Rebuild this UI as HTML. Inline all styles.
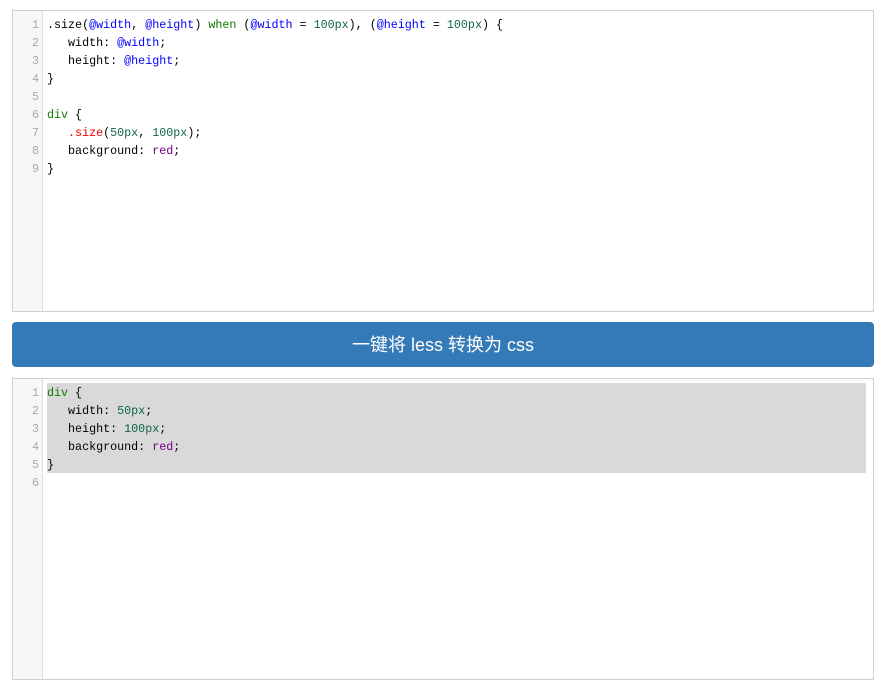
<!DOCTYPE html>
<html><head><meta charset="utf-8"><style>
body{margin:0;background:#fff;width:885px;height:689px;position:relative;overflow:hidden}
.ed{position:absolute;left:12px;width:860px;height:300px;border:1px solid #d0d0d0;background:#fff;overflow:hidden}
.gut{position:absolute;left:0;top:0;bottom:0;width:29px;background:#f7f7f7;border-right:1px solid #ddd}
.lines{position:absolute;left:0;top:5px;right:0;font-family:"Liberation Mono",monospace;font-size:11.7px;line-height:18px}
.l{height:18px;position:relative;white-space:pre}
.n{position:absolute;left:0;width:26px;text-align:right;color:#aaa}
.c{position:absolute;left:34px;color:#000}
.sel{position:absolute;left:34px;top:4px;width:819px;height:90px;background:#d9d9d9}
.k{color:#170}.v{color:#00f}.num{color:#164}.r{color:#e00}.a{color:#708}
.btn{position:absolute;left:12px;top:322px;width:862px;height:45px;background:#337ab7;border-radius:4px;color:#fff;font-family:"Liberation Sans","Noto Sans CJK SC",sans-serif;font-size:18px;line-height:47px;text-align:center}
</style></head><body>
<div class="ed" style="top:10px"><div class="gut"></div><div class="lines">
<div class="l"><span class="n">1</span><span class="c">.size(<span class="v">@width</span>, <span class="v">@height</span>) <span class="k">when</span> (<span class="v">@width</span> = <span class="num">100px</span>), (<span class="v">@height</span> = <span class="num">100px</span>) {</span></div>
<div class="l"><span class="n">2</span><span class="c">   width: <span class="v">@width</span>;</span></div>
<div class="l"><span class="n">3</span><span class="c">   height: <span class="v">@height</span>;</span></div>
<div class="l"><span class="n">4</span><span class="c">}</span></div>
<div class="l"><span class="n">5</span><span class="c"></span></div>
<div class="l"><span class="n">6</span><span class="c"><span class="k">div</span> {</span></div>
<div class="l"><span class="n">7</span><span class="c">   <span class="r">.size</span>(<span class="num">50px</span>, <span class="num">100px</span>);</span></div>
<div class="l"><span class="n">8</span><span class="c">   background: <span class="a">red</span>;</span></div>
<div class="l"><span class="n">9</span><span class="c">}</span></div>
</div></div>
<div class="btn">一键将 less 转换为 css</div>
<div class="ed" style="top:378px"><div class="gut"></div><div class="sel"></div><div class="lines">
<div class="l"><span class="n">1</span><span class="c"><span class="k">div</span> {</span></div>
<div class="l"><span class="n">2</span><span class="c">   width: <span class="num">50px</span>;</span></div>
<div class="l"><span class="n">3</span><span class="c">   height: <span class="num">100px</span>;</span></div>
<div class="l"><span class="n">4</span><span class="c">   background: <span class="a">red</span>;</span></div>
<div class="l"><span class="n">5</span><span class="c">}</span></div>
<div class="l"><span class="n">6</span><span class="c"></span></div>
</div></div>
</body></html>
